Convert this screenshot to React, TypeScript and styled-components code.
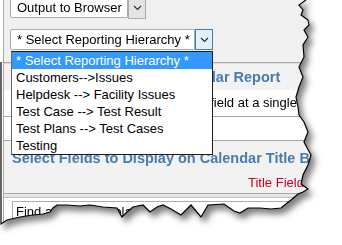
import React from "react"
import styled, { createGlobalStyle } from "styled-components"

// ______________________________________________________
// torn edge (right side, bottom, then back up the left)
const TEAR: [number, number][] = [
  [306, 0], [299, 5], [303, 10], [301, 15], [308, 20], [309, 25], [304, 30],
  [308, 37], [303, 45], [304, 57], [299, 67], [303, 77], [299, 87], [296, 97],
  [298, 107], [299, 115], [304, 122], [308, 132], [304, 142], [311, 155],
  [308, 165], [303, 175], [301, 184], [308, 189], [303, 192], [298, 194],
  [291, 200], [287, 203], [281, 208], [271, 209], [260, 208], [248, 208],
  [240, 213], [234, 211], [224, 204], [208, 205], [201, 217], [196, 211],
  [191, 205], [181, 215], [171, 209], [163, 205], [157, 207], [150, 212],
  [143, 205], [133, 207], [127, 212], [122, 217], [117, 208], [103, 207],
  [90, 205], [80, 206], [67, 205], [57, 205], [53, 208], [50, 212],
  [43, 214], [33, 215], [20, 217], [7, 220], [1, 224],
]

const clipPath = `polygon(0px 0px, ${TEAR.map(([x, y]) => `${x}px ${y}px`).join(", ")}, 0px 224px)`
const outline = [...TEAR, [1, 62]].map(([x, y]) => `${x},${y}`).join(" ")

const OPTIONS = [
  "* Select Reporting Hierarchy *",
  "Customers-->Issues",
  "Helpdesk --> Facility Issues",
  "Test Case --> Test Result",
  "Test Plans --> Test Cases",
  "Testing",
]

// ______________________________________________________
//
const GlobalStyle = createGlobalStyle`
  html, body {
    margin: 0;
    padding: 0;
    background: #fff;
  }
  body {
    font-family: "Liberation Sans", Arial, sans-serif;
    font-size: 13px;
    color: #000;
  }
  * {
    box-sizing: border-box;
  }
`

const Stage = styled.div`
  width: 342px;
  height: 245px;
  overflow: hidden;
  background: #fff;
`

const Torn = styled.div`
  position: relative;
  width: 314px;
  height: 232px;
  filter: drop-shadow(4px 5px 3px rgba(0, 0, 0, 0.5));
`

const Sheet = styled.div`
  width: 314px;
  height: 232px;
  clip-path: ${clipPath};
  background: #fff;
  display: flex;
`

const Frame = styled.div`
  flex: 1;
  margin-left: 3px;
  border-left: 1px solid #a9a9a9;
  display: flex;
  flex-direction: column;
`

const Edge = styled.svg`
  position: absolute;
  left: 0;
  top: 0;
  pointer-events: none;
`

const TopBand = styled.div`
  height: 62px;
  background: #f0f0f0;
  padding-left: 6px;
  display: flex;
  flex-direction: column;
  gap: 11px;
`

const SelectField = styled.div<{ $width: number; $lift?: number }>`
  position: relative;
  display: flex;
  width: ${p => p.$width}px;
  height: 21px;
  margin-top: ${p => -(p.$lift || 0)}px;
`

const SelectValue = styled.div`
  flex: 1;
  background: #fff;
  border: 1px solid #acacac;
  border-radius: 2px 0 0 2px;
  padding-left: 6px;
  line-height: 19px;
  white-space: nowrap;
  overflow: hidden;
`

const ArrowButton = styled.div<{ $active?: boolean }>`
  width: 18px;
  height: ${p => (p.$active ? 21 : 22)}px;
  border: 1px solid ${p => (p.$active ? "#3c7fb1" : "#acacac")};
  background: ${p => (p.$active ? "#e3effb" : "#e4e4e4")};
  display: flex;
  align-items: center;
  justify-content: center;
`

const List = styled.div`
  position: absolute;
  left: 1px;
  top: 22px;
  width: 202px;
  background: #fff;
  border: 1px solid #1c1c1c;
  border-left-color: #6a6a6a;
  z-index: 2;
`

const Option = styled.div<{ $selected?: boolean }>`
  height: 17px;
  line-height: 17px;
  padding-left: 4px;
  white-space: nowrap;
  background: ${p => (p.$selected ? "#3399ff" : "#fff")};
  color: ${p => (p.$selected ? "#fff" : "#000")};
`

const Rule = styled.div<{ $double?: boolean }>`
  height: ${p => (p.$double ? 2 : 1)}px;
  border-top: 1px solid #a8a8a8;
  ${p => (p.$double ? "border-bottom: 1px solid #dcdcdc;" : "")}
`

const ThickRule = styled.div`
  height: 5px;
  border-top: 1px solid #a6a6a6;
  border-bottom: 1px solid #c4c4c4;
  background: #e6e6e6;
`

const Header = styled.div<{ $height: number; $shift?: number; $indent?: number }>`
  height: ${p => p.$height}px;
  padding: ${p => p.$shift || 0}px 0 0 ${p => p.$indent || 8}px;
  line-height: ${p => p.$height - (p.$shift || 0)}px;
  background: #f2f2f2;
  color: #4a7cb0;
  font-size: 14.5px;
  font-weight: bold;
  white-space: nowrap;
`

const Row = styled.div<{ $height: number; $shaded?: boolean; $indent?: number }>`
  height: ${p => p.$height}px;
  line-height: ${p => p.$height}px;
  padding-left: ${p => p.$indent || 8}px;
  background: ${p => (p.$shaded ? "#f2f2f2" : "#fff")};
  white-space: nowrap;
`

const Spacer = styled.div<{ $height: number }>`
  height: ${p => p.$height}px;
`

const RedLabel = styled.span`
  margin-left: 236px;
  color: #cc0022;
`

const SearchRow = styled.div`
  padding: 3px 0 0 8px;
`

const SearchBox = styled.div`
  width: 280px;
  height: 21px;
  border: 1px solid #abadb3;
  padding-left: 3px;
  line-height: 19px;
  white-space: nowrap;
`

// ______________________________________________________
//
const Chevron: React.FC = () => (
  <svg width="9" height="6" viewBox="0 0 9 6">
    <polyline points="1,1 4.5,4.5 8,1" fill="none" stroke="#2a2a2a" strokeWidth="1.1" />
  </svg>
)

const App: React.FC = () => {
  return (
    <Stage>
      <GlobalStyle />
      <Torn>
        <Sheet>
          <Frame>
            <TopBand>
              <SelectField $width={136} $lift={3}>
                <SelectValue>Output to Browser</SelectValue>
                <ArrowButton>
                  <Chevron />
                </ArrowButton>
              </SelectField>
              <SelectField $width={203}>
                <SelectValue>* Select Reporting Hierarchy *</SelectValue>
                <ArrowButton $active>
                  <Chevron />
                </ArrowButton>
                <List>
                  {OPTIONS.map((o, i) => (
                    <Option key={o} $selected={i === 0}>
                      {o}
                    </Option>
                  ))}
                </List>
              </SelectField>
            </TopBand>
            <Rule $double />
            <Header $height={26} $indent={12}>
              Select Date Fields for Calendar Report
            </Header>
            <Row $height={26} $indent={14}>
              Records are plotted by their date field at a single
            </Row>
            <Rule />
            <Spacer $height={23} />
            <Rule />
            <Header $height={31} $shift={4}>
              Select Fields to Display on Calendar Title Bar
            </Header>
            <Row $height={21} $shaded>
              <RedLabel>Title Fields</RedLabel>
            </Row>
            <ThickRule />
            <SearchRow>
              <SearchBox>Find a field to display</SearchBox>
            </SearchRow>
          </Frame>
        </Sheet>
        <Edge width="314" height="232">
          <polyline points={outline} fill="none" stroke="#000" strokeWidth="1.2" />
        </Edge>
      </Torn>
    </Stage>
  )
}

export default App
